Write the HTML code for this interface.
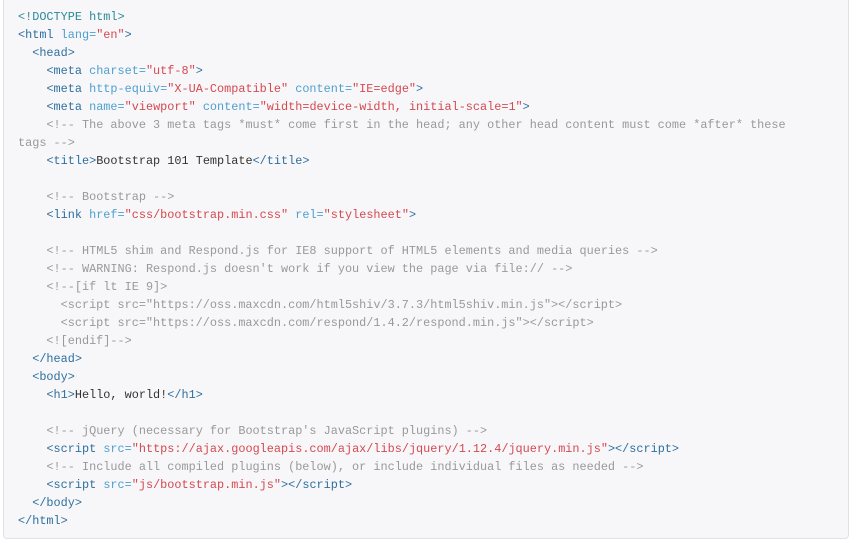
<!DOCTYPE html>
<html><head><style>
body{margin:0;background:#fff;width:855px;height:543px;overflow:hidden}
.box{position:absolute;left:3px;top:-5px;width:844px;height:542px;background:#f7f7f9;border:1px solid #e1e1e8;border-radius:4px}
pre{position:absolute;left:18px;top:8px;margin:0;font-family:"Liberation Mono",monospace;font-size:11.85px;line-height:18px;color:#333}
.t{color:#2f6f9f}.a{color:#4f9fcf}.s{color:#d44950}.c{color:#999}.p{color:#2b8a96}
</style></head><body><div class="box"></div>
<pre><span class="p">&lt;!DOCTYPE html&gt;</span>
<span class="t">&lt;html</span> <span class="a">lang=</span><span class="s">"en"</span><span class="t">&gt;</span>
  <span class="t">&lt;head&gt;</span>
    <span class="t">&lt;meta</span> <span class="a">charset=</span><span class="s">"utf-8"</span><span class="t">&gt;</span>
    <span class="t">&lt;meta</span> <span class="a">http-equiv=</span><span class="s">"X-UA-Compatible"</span> <span class="a">content=</span><span class="s">"IE=edge"</span><span class="t">&gt;</span>
    <span class="t">&lt;meta</span> <span class="a">name=</span><span class="s">"viewport"</span> <span class="a">content=</span><span class="s">"width=device-width, initial-scale=1"</span><span class="t">&gt;</span>
    <span class="c">&lt;!-- The above 3 meta tags *must* come first in the head; any other head content must come *after* these
tags --&gt;</span>
    <span class="t">&lt;title&gt;</span>Bootstrap 101 Template<span class="t">&lt;/title&gt;</span>

    <span class="c">&lt;!-- Bootstrap --&gt;</span>
    <span class="t">&lt;link</span> <span class="a">href=</span><span class="s">"css/bootstrap.min.css"</span> <span class="a">rel=</span><span class="s">"stylesheet"</span><span class="t">&gt;</span>

    <span class="c">&lt;!-- HTML5 shim and Respond.js for IE8 support of HTML5 elements and media queries --&gt;</span>
    <span class="c">&lt;!-- WARNING: Respond.js doesn't work if you view the page via file:// --&gt;</span>
    <span class="c">&lt;!--[if lt IE 9]&gt;
      &lt;script src="https://oss.maxcdn.com/html5shiv/3.7.3/html5shiv.min.js"&gt;&lt;/script&gt;
      &lt;script src="https://oss.maxcdn.com/respond/1.4.2/respond.min.js"&gt;&lt;/script&gt;
    &lt;![endif]--&gt;</span>
  <span class="t">&lt;/head&gt;</span>
  <span class="t">&lt;body&gt;</span>
    <span class="t">&lt;h1&gt;</span>Hello, world!<span class="t">&lt;/h1&gt;</span>

    <span class="c">&lt;!-- jQuery (necessary for Bootstrap's JavaScript plugins) --&gt;</span>
    <span class="t">&lt;script</span> <span class="a">src=</span><span class="s">"https://ajax.googleapis.com/ajax/libs/jquery/1.12.4/jquery.min.js"</span><span class="t">&gt;&lt;/script&gt;</span>
    <span class="c">&lt;!-- Include all compiled plugins (below), or include individual files as needed --&gt;</span>
    <span class="t">&lt;script</span> <span class="a">src=</span><span class="s">"js/bootstrap.min.js"</span><span class="t">&gt;&lt;/script&gt;</span>
  <span class="t">&lt;/body&gt;</span>
<span class="t">&lt;/html&gt;</span></pre>
</body></html>
